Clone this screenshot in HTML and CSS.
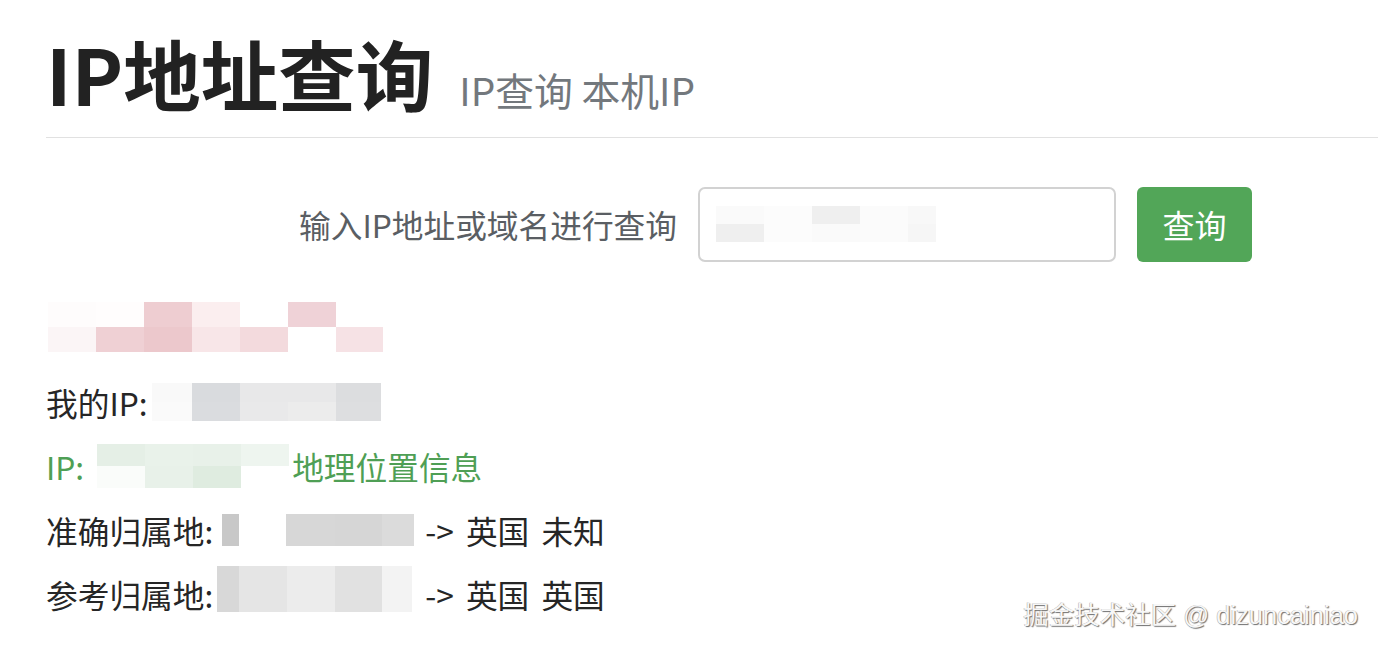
FILE: index.html
```html
<!DOCTYPE html>
<html lang="zh-CN">
<head>
<meta charset="utf-8">
<title>IP地址查询</title>
<link rel="stylesheet" href="styles.css">
</head>
<body>
<div class="page">
  <header class="page-header">
    <h1>IP地址查询<small>IP查询 本机IP</small></h1>
  </header>

  <form class="query">
    <label class="query-label">输入IP地址或域名进行查询</label>
    <div class="query-input">
      <span class="mosaic mosaic-input">
        <span class="col" style="width:48px"><i style="background:#fafafa"></i><i style="background:#efefef"></i></span>
        <span class="col" style="width:48px"><i style="background:#fcfcfc"></i><i style="background:#fcfcfc"></i></span>
        <span class="col" style="width:48px"><i style="background:#efefef"></i><i style="background:#fafafa"></i></span>
        <span class="col" style="width:48px"><i style="background:#fbfbfb"></i><i style="background:#fbfbfb"></i></span>
        <span class="col" style="width:28px"><i style="background:#f8f8f8"></i><i style="background:#f6f6f6"></i></span>
      </span>
    </div>
    <button type="button" class="btn-query">查询</button>
  </form>

  <div class="results">
    <div class="banner">
      <span class="mosaic mosaic-banner">
        <span class="col" style="width:48px"><i style="background:#fefcfc"></i><i style="background:#fbf5f6"></i></span>
        <span class="col" style="width:48px"><i style="background:#fffdfd"></i><i style="background:#efd0d4"></i></span>
        <span class="col" style="width:48px"><i style="background:#eecdd1"></i><i style="background:#ecc8cc"></i></span>
        <span class="col" style="width:48px"><i style="background:#fbeeef"></i><i style="background:#f8e6e8"></i></span>
        <span class="col" style="width:48px"><i style="background:#ffffff"></i><i style="background:#f3dadd"></i></span>
        <span class="col" style="width:48px"><i style="background:#efd2d7"></i><i style="background:#ffffff"></i></span>
        <span class="col" style="width:47px"><i style="background:#ffffff"></i><i style="background:#f6e2e5"></i></span>
      </span>
    </div>

    <div class="row">
      <span>我的IP:</span>
      <span class="mosaic mosaic-myip">
        <span class="col" style="width:40px"><i style="background:#f9f9f9"></i><i style="background:#fafafa"></i></span>
        <span class="col" style="width:48px"><i style="background:#d9dbde"></i><i style="background:#dadcdf"></i></span>
        <span class="col" style="width:48px"><i style="background:#e8e8e9"></i><i style="background:#e9e9ea"></i></span>
        <span class="col" style="width:48px"><i style="background:#e8e8e9"></i><i style="background:#ececec"></i></span>
        <span class="col" style="width:45px"><i style="background:#dcdddf"></i><i style="background:#dddee0"></i></span>
      </span>
    </div>

    <div class="row green">
      <span>IP:</span>
      <span class="mosaic mosaic-geo">
        <span class="col" style="width:48px"><i style="background:#e5efe6"></i><i style="background:#fafcfa"></i></span>
        <span class="col" style="width:48px"><i style="background:#e9f2ea"></i><i style="background:#e8f1e9"></i></span>
        <span class="col" style="width:48px"><i style="background:#e8f1e9"></i><i style="background:#dfece0"></i></span>
        <span class="col" style="width:48px"><i style="background:#eef5ef"></i><i style="background:#ffffff"></i></span>
      </span>
      <span class="geo-link">地理位置信息</span>
    </div>

    <div class="row">
      <span>准确归属地:</span>
      <span class="mosaic mosaic-exact">
        <span class="col" style="width:17px"><i style="background:#c8c8c8"></i></span>
        <span class="col" style="width:47px"><i style="background:#ffffff"></i></span>
        <span class="col" style="width:49px"><i style="background:#d7d7d7"></i></span>
        <span class="col" style="width:47px"><i style="background:#d6d6d6"></i></span>
        <span class="col" style="width:32px"><i style="background:#dbdbdb"></i></span>
      </span>
      <span class="arrow">-&gt; 英国 未知</span>
    </div>

    <div class="row">
      <span>参考归属地:</span>
      <span class="mosaic mosaic-ref">
        <span class="col" style="width:22px"><i style="background:#d8d8d8"></i></span>
        <span class="col" style="width:48px"><i style="background:#e5e5e5"></i></span>
        <span class="col" style="width:48px"><i style="background:#ececec"></i></span>
        <span class="col" style="width:47px"><i style="background:#e1e1e1"></i></span>
        <span class="col" style="width:30px"><i style="background:#f3f3f3"></i></span>
      </span>
      <span class="arrow arrow-ref">-&gt; 英国 英国</span>
    </div>
  </div>
</div>

<div class="watermark">掘金技术社区 @ dizuncainiao</div>
</body>
</html>
```

FILE: styles.css
```css
* {
  box-sizing: border-box;
}

html, body {
  margin: 0;
  padding: 0;
  background: #ffffff;
}

body {
  font-family: "Noto Sans CJK SC", "Noto Sans", sans-serif;
  color: #262626;
  width: 1378px;
  height: 654px;
  overflow: hidden;
}

.page {
  padding-left: 46px;
}

/* Header */
.page-header {
  padding-top: 26px;
  padding-bottom: 17px;
  border-bottom: 1.5px solid #e1e1e1;
}

.page-header h1 {
  margin: 0;
  font-size: 77.5px;
  font-weight: 700;
  line-height: 1.21;
  color: #222222;
  white-space: nowrap;
}

.page-header small {
  margin-left: 26px;
  font-size: 38.8px;
  font-weight: 400;
  color: #73787d;
}

/* Query form */
.query {
  display: flex;
  align-items: center;
  margin-top: 49px;
  height: 75px;
}

.query-label {
  width: 631px;
  text-align: right;
  font-size: 31.7px;
  color: #5a5e63;
  line-height: 75px;
}

.query-input {
  margin-left: 21px;
  width: 418px;
  height: 75px;
  border: 2px solid #d2d2d2;
  border-radius: 7px;
  display: flex;
  align-items: center;
  padding-left: 16px;
}

.btn-query {
  margin-left: 21px;
  width: 115px;
  height: 75px;
  border: none;
  border-radius: 6px;
  background: #52a658;
  color: #ffffff;
  font-family: "Noto Sans CJK SC", sans-serif;
  font-size: 32px;
  padding: 0;
}

/* Mosaic blocks (pixelated redactions) */
.mosaic {
  display: flex;
  flex: none;
}

.mosaic .col {
  display: flex;
  flex-direction: column;
}

.mosaic i {
  display: block;
  flex: 1;
}

.mosaic-input {
  height: 36px;
}

.mosaic-banner {
  height: 50px;
  margin-left: 2px;
}

.mosaic-myip {
  height: 38px;
  margin-left: 4px;
}

.mosaic-geo {
  height: 44px;
  margin-left: 13px;
}

.mosaic-exact {
  height: 32px;
  margin-left: 9px;
}

.mosaic-ref {
  height: 46px;
  margin-left: 4px;
  align-self: flex-start;
  margin-top: 4px;
}

/* Results */
.results {
  margin-top: 40px;
}

.banner {
  height: 50px;
  display: flex;
  margin-bottom: 18px;
}

.row {
  display: flex;
  align-items: center;
  height: 64px;
  line-height: 64px;
  font-size: 31.7px;
  white-space: nowrap;
}

.row.green {
  color: #4f9f55;
}

.geo-link {
  margin-left: 3px;
}

.arrow {
  margin-left: 11px;
  word-spacing: 5px;
}

.arrow-ref {
  margin-left: 13px;
}

/* Watermark overlay */
.watermark {
  position: absolute;
  right: 20px;
  top: 603px;
  font-family: "Liberation Sans", "Noto Sans CJK SC", sans-serif;
  font-size: 25.5px;
  line-height: 1;
  color: #f7f7f7;
  text-shadow: 1px 1px 1px #6e6e6e, -0.5px -0.5px 0 #b0b0b0;
  white-space: nowrap;
}
```
